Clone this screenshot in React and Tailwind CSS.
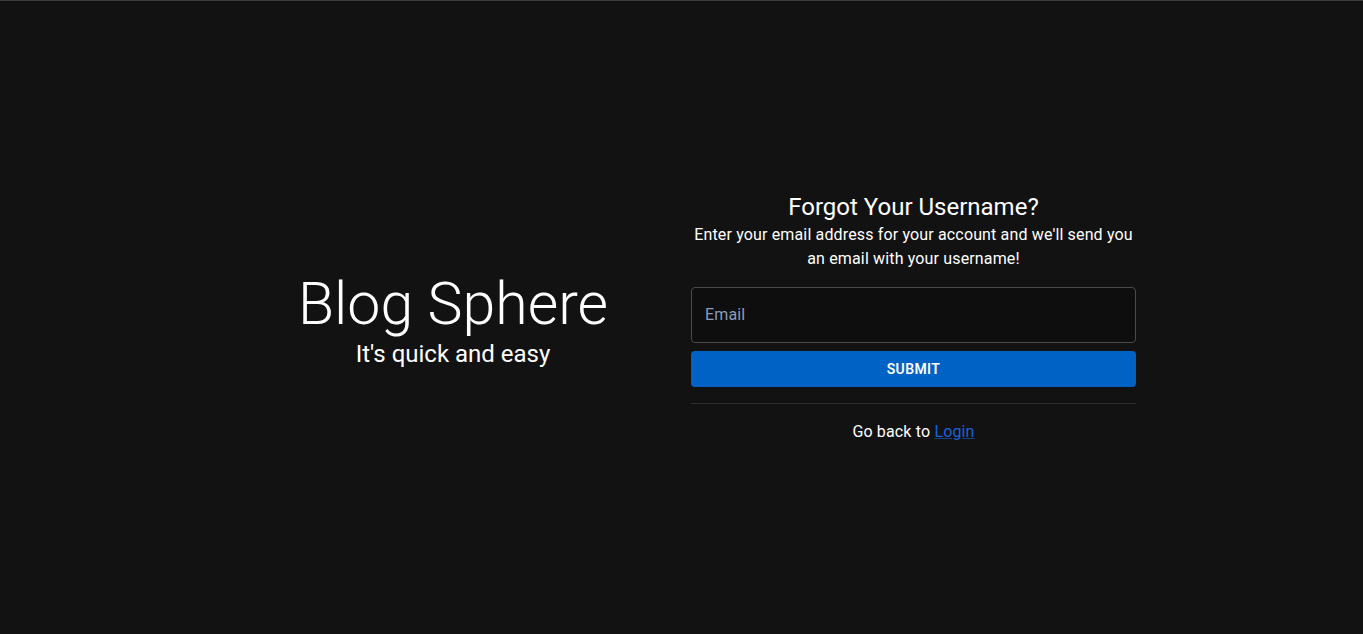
export default function App() {
  return (
    <div
      className="flex h-[634px] w-full flex-col border-t border-[#3b3a40] bg-[#121212] text-white"
      style={{ fontFamily: 'Roboto, "Liberation Sans", sans-serif' }}
    >
      <div className="flex flex-1 items-center justify-center">
        <div className="flex w-[460px] flex-col items-center pt-[3px]">
          <h1 className="text-[59px] font-light leading-[1.2]">Blog Sphere</h1>
          <p className="text-[24px] leading-[1.2]">It's quick and easy</p>
        </div>

        <div className="ml-[8px] mr-[4px] flex w-[445px] flex-col items-center">
          <h2 className="text-[24px] leading-[1.334]">Forgot Your Username?</h2>
          <p className="text-center text-[16px] leading-[1.5] tracking-[0.15px]">
            Enter your email address for your account and we'll send you an email with your username!
          </p>

          <form className="mt-[16px] flex w-full flex-col">
            <input
              type="email"
              placeholder="Email"
              className="h-[56px] w-full rounded-[4px] border border-[#4a4a4a] bg-[#0e0e0e] px-[13px] pb-[2px] text-[16px] tracking-[0.15px] text-white outline-none placeholder:text-[#8a9cba]"
            />
            <button
              type="button"
              className="mt-[8px] h-[36px] w-full rounded-[4px] bg-[#0062c4] text-[14px] font-semibold uppercase tracking-[0.4px] text-white"
            >
              Submit
            </button>
          </form>

          <hr className="mt-[16px] w-full border-t border-[#2e2e2e]" />

          <p className="mt-[16px] text-[16px] leading-[1.5] tracking-[0.15px]">
            Go back to{' '}
            <a href="#" className="text-[#1a63d6] underline decoration-[#1a63d6]/60">
              Login
            </a>
          </p>
        </div>
      </div>
    </div>
  );
}
